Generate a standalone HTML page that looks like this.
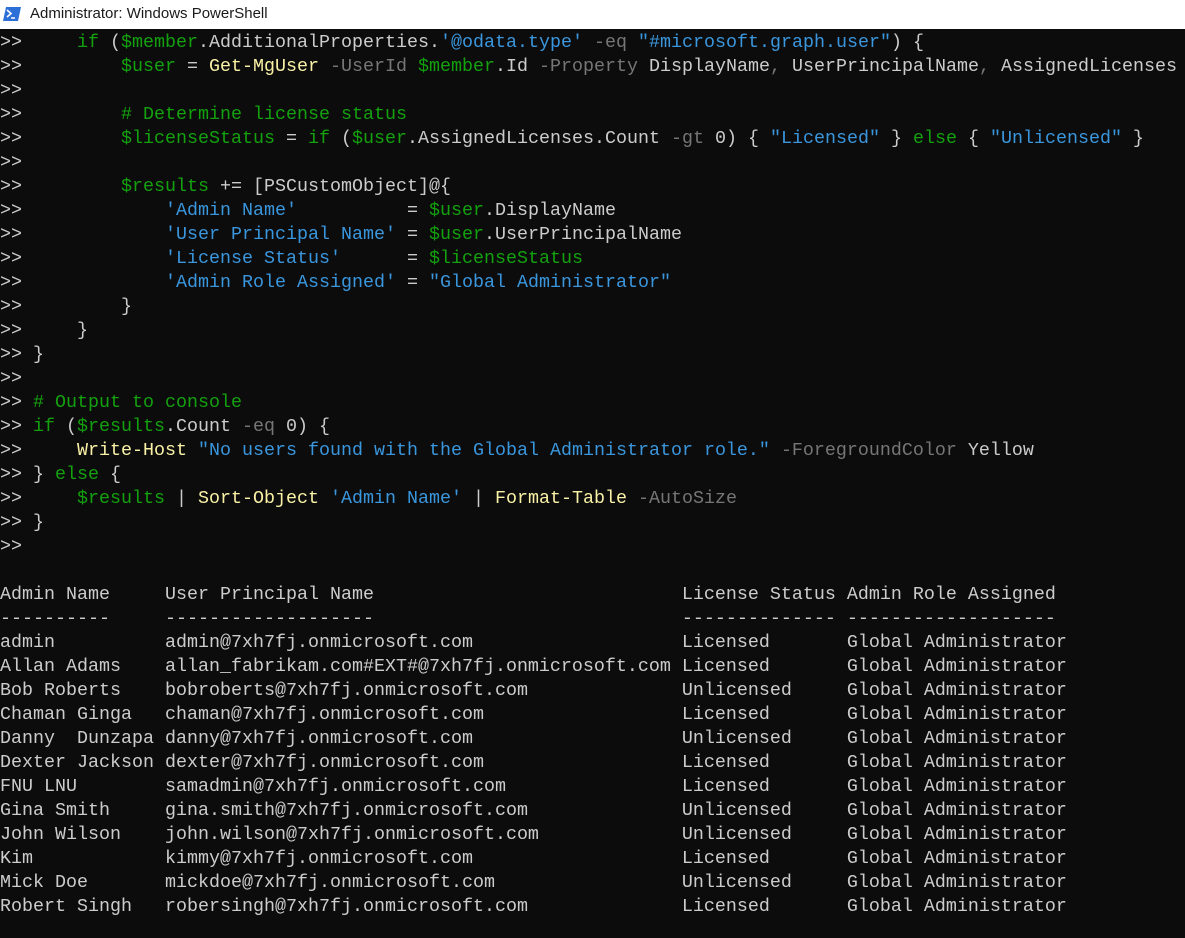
<!DOCTYPE html>
<html><head><meta charset="utf-8"><style>
html,body{margin:0;padding:0;width:1185px;height:938px;overflow:hidden;background:#0c0c0c}
.tb{position:absolute;left:0;top:0;width:1185px;height:29px;background:#fff;font:15px "Liberation Sans",sans-serif;color:#1a1a1a}
.tb span{position:absolute;left:30px;top:5px}
.tb svg{position:absolute;left:3px;top:7px}
pre{position:absolute;left:0;top:31px;margin:0;font:18.33px/24px "Liberation Mono",monospace;color:#cccccc;letter-spacing:0}
.g{color:#13a10e}.b{color:#3a96dd}.y{color:#f9f1a5}.d{color:#767676}
</style></head><body>
<div class="tb"><svg width="18" height="14" viewBox="0 0 18 14"><path d="M3 0H18L15 14H0Z" fill="#2c6fd6"/><path d="M4 3L8 6.5L4 10" stroke="#fff" stroke-width="1.6" fill="none"/><path d="M8 11H12" stroke="#fff" stroke-width="1.5"/></svg><span>Administrator: Windows PowerShell</span></div>
<pre>&gt;&gt;     <span class="g">if</span> (<span class="g">$member</span>.AdditionalProperties.<span class="b">'@odata.type'</span> <span class="d">-eq</span> <span class="b">"#microsoft.graph.user"</span>) {
&gt;&gt;         <span class="g">$user</span> = <span class="y">Get-MgUser</span> <span class="d">-UserId</span> <span class="g">$member</span>.Id <span class="d">-Property</span> DisplayName<span class="d">,</span> UserPrincipalName<span class="d">,</span> AssignedLicenses
&gt;&gt;
&gt;&gt;         <span class="g"># Determine license status</span>
&gt;&gt;         <span class="g">$licenseStatus</span> = <span class="g">if</span> (<span class="g">$user</span>.AssignedLicenses.Count <span class="d">-gt</span> 0) { <span class="b">"Licensed"</span> } <span class="g">else</span> { <span class="b">"Unlicensed"</span> }
&gt;&gt;
&gt;&gt;         <span class="g">$results</span> += [PSCustomObject]@{
&gt;&gt;             <span class="b">'Admin Name'</span>          = <span class="g">$user</span>.DisplayName
&gt;&gt;             <span class="b">'User Principal Name'</span> = <span class="g">$user</span>.UserPrincipalName
&gt;&gt;             <span class="b">'License Status'</span>      = <span class="g">$licenseStatus</span>
&gt;&gt;             <span class="b">'Admin Role Assigned'</span> = <span class="b">"Global Administrator"</span>
&gt;&gt;         }
&gt;&gt;     }
&gt;&gt; }
&gt;&gt;
&gt;&gt; <span class="g"># Output to console</span>
&gt;&gt; <span class="g">if</span> (<span class="g">$results</span>.Count <span class="d">-eq</span> 0) {
&gt;&gt;     <span class="y">Write-Host</span> <span class="b">"No users found with the Global Administrator role."</span> <span class="d">-ForegroundColor</span> Yellow
&gt;&gt; } <span class="g">else</span> {
&gt;&gt;     <span class="g">$results</span> | <span class="y">Sort-Object</span> <span class="b">'Admin Name'</span> | <span class="y">Format-Table</span> <span class="d">-AutoSize</span>
&gt;&gt; }
&gt;&gt;

Admin Name     User Principal Name                            License Status Admin Role Assigned
----------     -------------------                            -------------- -------------------
admin          admin@7xh7fj.onmicrosoft.com                   Licensed       Global Administrator
Allan Adams    allan_fabrikam.com#EXT#@7xh7fj.onmicrosoft.com Licensed       Global Administrator
Bob Roberts    bobroberts@7xh7fj.onmicrosoft.com              Unlicensed     Global Administrator
Chaman Ginga   chaman@7xh7fj.onmicrosoft.com                  Licensed       Global Administrator
Danny  Dunzapa danny@7xh7fj.onmicrosoft.com                   Unlicensed     Global Administrator
Dexter Jackson dexter@7xh7fj.onmicrosoft.com                  Licensed       Global Administrator
FNU LNU        samadmin@7xh7fj.onmicrosoft.com                Licensed       Global Administrator
Gina Smith     gina.smith@7xh7fj.onmicrosoft.com              Unlicensed     Global Administrator
John Wilson    john.wilson@7xh7fj.onmicrosoft.com             Unlicensed     Global Administrator
Kim            kimmy@7xh7fj.onmicrosoft.com                   Licensed       Global Administrator
Mick Doe       mickdoe@7xh7fj.onmicrosoft.com                 Unlicensed     Global Administrator
Robert Singh   robersingh@7xh7fj.onmicrosoft.com              Licensed       Global Administrator
</pre>
</body></html>
